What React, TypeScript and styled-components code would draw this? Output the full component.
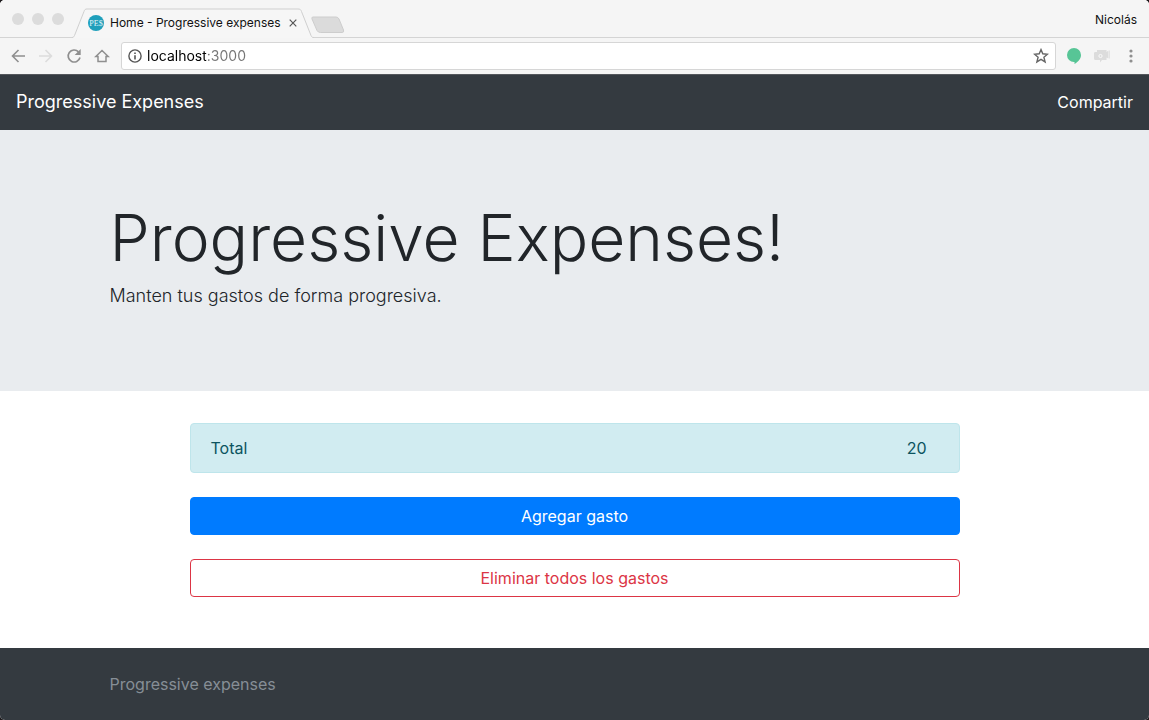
import React from "react";
import styled, { createGlobalStyle } from "styled-components";

const GlobalStyle = createGlobalStyle`
  *, *::before, *::after { box-sizing: border-box; }
  body {
    margin: 0;
    background: #1d1a1c;
    font-family: Inter, "Liberation Sans", sans-serif;
    font-size: 16px;
    line-height: 24px;
    color: #212529;
  }
  h1, p { margin: 0; }
`;

const Window = styled.div`
  display: flex;
  flex-direction: column;
  min-height: 100vh;
  border-radius: 5px;
  overflow: hidden;
  background: #fff;
`;

/* Browser chrome */

const BrowserFrame = styled.header`
  background: #f5f5f5;
`;

const TabStrip = styled.div`
  display: flex;
  height: 38px;
  background: linear-gradient(#f5f5f5 37px, #d4d4d4 37px);
`;

const TrafficLights = styled.div`
  display: flex;
  gap: 8px;
  padding: 13px 8px 0 12px;
`;

const Light = styled.span`
  width: 12px;
  height: 12px;
  border-radius: 50%;
  background: #dcdcdc;
`;

const Tab = styled.div`
  position: relative;
  display: flex;
  align-items: center;
  width: 242px;
  padding: 8px 17px 0 16px;
  font-size: 12px;
  line-height: 16px;
  color: #111;
`;

const TabShape = styled.svg`
  position: absolute;
  inset: 0;
`;

const Favicon = styled.svg`
  position: relative;
  flex: none;
  margin-right: 6px;
`;

const TabTitle = styled.span`
  position: relative;
  flex: 1;
  white-space: nowrap;
`;

const IconButton = styled.button<{ $tone?: string }>`
  position: relative;
  display: flex;
  flex: none;
  padding: 0;
  border: 0;
  background: none;
  color: ${({ $tone }) => $tone ?? "#8f8f8f"};
`;

const NewTab = styled(IconButton)`
  align-self: flex-start;
  margin: 16px 0 0 -3px;
`;

const Profile = styled(IconButton)`
  align-self: center;
  margin: 2px 12px 0 auto;
  font: 12px/16px Inter, "Liberation Sans", sans-serif;
`;

const Toolbar = styled.div`
  display: flex;
  align-items: center;
  gap: 12px;
  height: 36px;
  padding: 0 10px;
`;

const AddressBar = styled.label`
  display: flex;
  flex: 1;
  align-items: center;
  gap: 5px;
  height: 28px;
  margin: 0 -1px;
  padding: 0 6px;
  border: 1px solid #d6d6d6;
  border-radius: 3px;
  background: #fff;
`;

const Address = styled.input`
  flex: 1;
  min-width: 0;
  height: 20px;
  padding: 0;
  border: 0;
  outline: 0;
  font: 14px/20px Inter, "Liberation Sans", sans-serif;
  color: transparent;
  background: linear-gradient(90deg, #000 59px, #757575 59px);
  background-clip: text;
  -webkit-background-clip: text;
`;

/* Page */

const Navbar = styled.nav`
  display: flex;
  align-items: center;
  justify-content: space-between;
  height: 56px;
  padding: 0 16px;
  box-shadow: inset 0 1px #54575c;
  background: #343a40;
`;

const NavLink = styled.a`
  color: #fff;
  text-decoration: none;
`;

const Brand = styled(NavLink)`
  font-size: 18px;
`;

const Container = styled.div`
  width: 100%;
  max-width: 960px;
  margin: 0 auto;
  padding: 0 15px;
`;

const Hero = styled.section`
  padding: 64px 0 80px;
  background: #e9ecef;
  font-weight: 300;
`;

const HeroTitle = styled.h1`
  font-size: 64px;
  font-weight: 300;
  line-height: 87px;
`;

const Lead = styled.p`
  font-size: 18px;
  line-height: 30px;
`;

const Main = styled.main`
  display: flex;
  flex: 1;
  flex-direction: column;
  gap: 24px;
  width: 100%;
  max-width: 770px;
  margin: 0 auto;
  padding: 32px 0 51px;
`;

const Total = styled.div`
  display: flex;
  justify-content: space-between;
  padding: 12px 32px 12px 20px;
  border: 1px solid #bee5eb;
  border-radius: 4px;
  background: #d1ecf1;
  color: #0c5460;
`;

const ActionButton = styled.button<{ $outline?: boolean }>`
  padding: 6px 12px;
  border: 1px solid ${({ $outline }) => ($outline ? "#dc3545" : "#007bff")};
  border-radius: 4px;
  background: ${({ $outline }) => ($outline ? "#fff" : "#007bff")};
  color: ${({ $outline }) => ($outline ? "#dc3545" : "#fff")};
  font: 16px/24px Inter, "Liberation Sans", sans-serif;
`;

const Footer = styled.footer`
  padding: 24px 0;
  background: #343a40;
  color: #868e96;
`;

export default function App() {
  return (
    <>
      <GlobalStyle />
      <Window>
        <BrowserFrame>
          <TabStrip>
            <TrafficLights>
              <Light />
              <Light />
              <Light />
            </TrafficLights>
            <Tab>
              <TabShape width="242" height="38" viewBox="0 0 242 38">
                <path
                  d="M0 38 V37.5 C1.500 37.500 2 36.500 2.500 35.500 L12 11.500 C12.700 9.500 13.300 9 15 9 H226 C228 9 228.800 9.500 229.500 11.500 L239 35.500 C239.600 37 240.300 37.500 242 37.500 V38 Z"
                  fill="#f6f6f6"
                />
                <path
                  d="M0 37.500 C1.500 37.500 2 36.500 2.500 35.500 L12 11.500 C12.700 9.500 13.300 9 15 9 H226 C228 9 228.800 9.500 229.500 11.500 L239 35.500 C239.600 37 240.300 37.500 242 37.500"
                  fill="none"
                  stroke="#cfcfcf"
                />
              </TabShape>
              <Favicon width="16" height="16" viewBox="0 0 16 16">
                <circle cx="8" cy="8" r="8" fill="#1f9fbb" />
                <text
                  x="8"
                  y="10.500"
                  textAnchor="middle"
                  fontFamily="Liberation Serif, serif"
                  fontSize="8"
                  fill="#e4f5f9"
                >
                  PE$
                </text>
              </Favicon>
              <TabTitle>Home - Progressive expenses</TabTitle>
              <IconButton aria-label="Close tab" $tone="#555">
                <svg width="8" height="8" viewBox="0 0 8 8" stroke="currentColor" strokeWidth="1.200">
                  <path d="M.7 .7 L7.300 7.300 M7.300 .7 L.7 7.300" />
                </svg>
              </IconButton>
            </Tab>
            <NewTab aria-label="New tab">
              <svg width="34" height="18" viewBox="0 0 34 18">
                <path
                  d="M2 1 H25 Q27 1 28 3 L32.500 14 Q33.300 16.500 31 16.500 H9.500 Q7 16.500 6 14.500 L1 3 Q.3 1 2 1 Z"
                  fill="#dbdbdb"
                  stroke="#cdcdcd"
                />
              </svg>
            </NewTab>
            <Profile $tone="#111">Nicolás</Profile>
          </TabStrip>
          <Toolbar>
            <IconButton aria-label="Back">
              <svg width="16" height="16" viewBox="0 0 16 16" fill="none" stroke="currentColor" strokeWidth="1.600">
                <path d="M15 8 H3 M8.500 2 L2.500 8 L8.500 14" />
              </svg>
            </IconButton>
            <IconButton aria-label="Forward" $tone="#dcdcdc">
              <svg width="16" height="16" viewBox="0 0 16 16" fill="none" stroke="currentColor" strokeWidth="1.600">
                <path d="M1 8 H13 M7.500 2 L13.500 8 L7.500 14" />
              </svg>
            </IconButton>
            <IconButton aria-label="Reload">
              <svg width="16" height="16" viewBox="0 0 16 16" fill="none">
                <path d="M12.500 3.800 A6 6 0 1 0 14 9.500" stroke="currentColor" strokeWidth="1.700" />
                <path d="M14.700 1 V7 H8.700 Z" fill="currentColor" />
              </svg>
            </IconButton>
            <IconButton aria-label="Home">
              <svg width="16" height="16" viewBox="0 0 16 16" fill="none" stroke="currentColor" strokeWidth="1.500">
                <path d="M1.800 8.500 H4 V13.500 H12 V8.500 H14.200 L8 2.500 Z" />
              </svg>
            </IconButton>
            <AddressBar>
              <svg width="14" height="14" viewBox="0 0 14 14" fill="none" stroke="#555">
                <circle cx="7" cy="7" r="6.100" strokeWidth="1.400" />
                <path d="M7 6.200 V10.500 M7 3.500 V5" strokeWidth="1.600" />
              </svg>
              <Address aria-label="Address" defaultValue="localhost:3000" spellCheck={false} />
              <IconButton aria-label="Bookmark" $tone="#666">
                <svg width="16" height="16" viewBox="0 0 16 16" fill="none" stroke="currentColor" strokeWidth="1.400">
                  <path d="M8 1.600 L9.800 5.800 L14.500 6.200 L10.900 9.200 L12.100 13.900 L8 11.300 L3.900 13.900 L5.100 9.200 L1.500 6.200 L6.200 5.800 Z" />
                </svg>
              </IconButton>
            </AddressBar>
            <IconButton aria-label="Chat extension" $tone="#57c596">
              <svg width="14" height="16" viewBox="0 0 14 16" fill="currentColor">
                <path d="M7 0 A7 7 0 0 1 14 7 C14 11 11 14 7.500 16 V14 H7 A7 7 0 0 1 7 0 Z" />
              </svg>
            </IconButton>
            <IconButton aria-label="Camera extension" $tone="#dcdcdc">
              <svg width="18" height="14" viewBox="0 0 18 14" fill="currentColor">
                <path d="M4 1 H13.500 V3 L15.500 1.500 V9.500 L13.500 8.500 V11 H9 L7 13.500 V11 H2.500 Q1 11 1 9.500 V4 Q1 3 2.500 3 H4 Z" />
                <path d="M16.300 1.500 H17 V9.500 H16.300 Z" />
                <circle cx="7.500" cy="7" r="1.600" fill="none" stroke="#fafafa" />
              </svg>
            </IconButton>
            <IconButton aria-label="Menu">
              <svg width="16" height="16" viewBox="0 0 16 16" fill="currentColor">
                <circle cx="8" cy="3" r="1.600" />
                <circle cx="8" cy="8" r="1.600" />
                <circle cx="8" cy="13" r="1.600" />
              </svg>
            </IconButton>
          </Toolbar>
        </BrowserFrame>

        <Navbar>
          <Brand href="#">Progressive Expenses</Brand>
          <NavLink href="#compartir">Compartir</NavLink>
        </Navbar>

        <Hero>
          <Container>
            <HeroTitle>Progressive Expenses!</HeroTitle>
            <Lead>Manten tus gastos de forma progresiva.</Lead>
          </Container>
        </Hero>

        <Main>
          <Total>
            <span>Total</span>
            <span>20</span>
          </Total>
          <ActionButton type="button">Agregar gasto</ActionButton>
          <ActionButton type="button" $outline>
            Eliminar todos los gastos
          </ActionButton>
        </Main>

        <Footer>
          <Container>Progressive expenses</Container>
        </Footer>
      </Window>
    </>
  );
}
